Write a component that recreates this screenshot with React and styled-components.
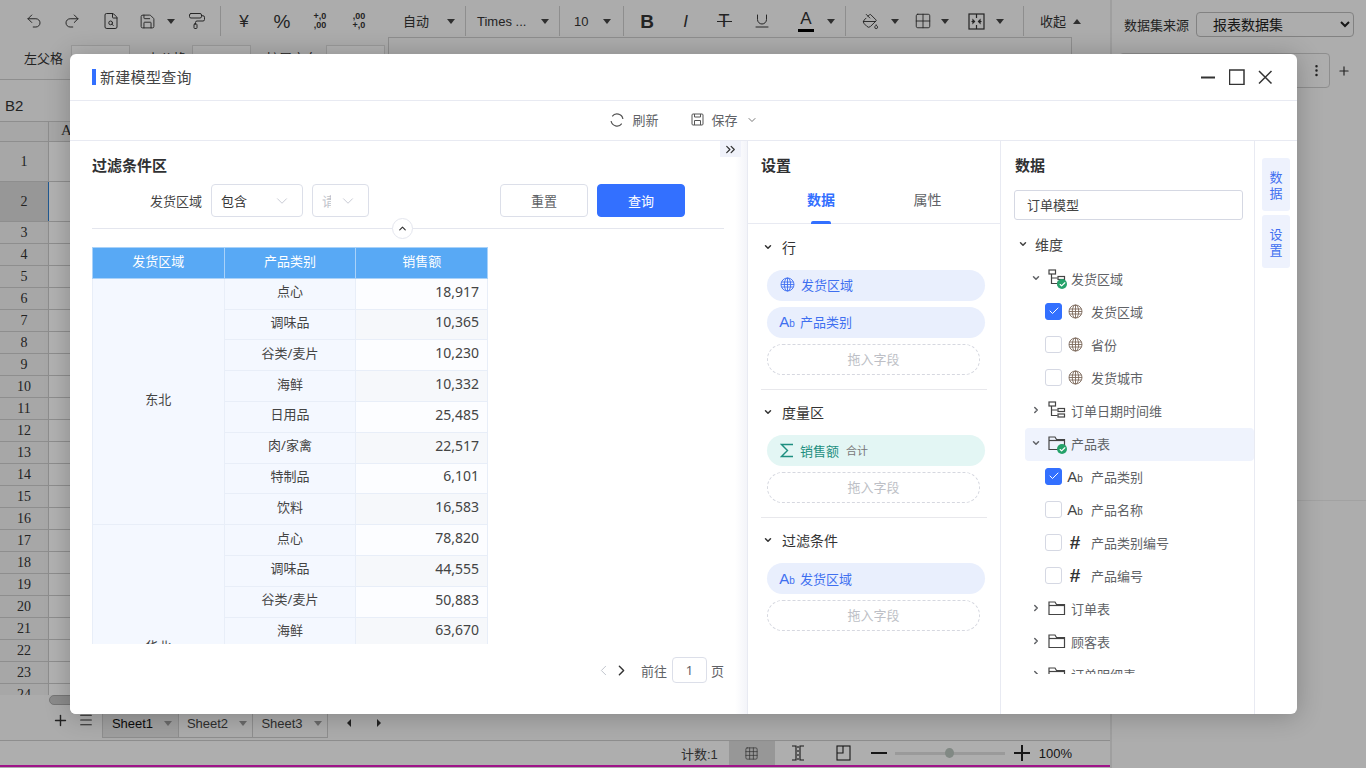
import React from 'react';
import styled, { createGlobalStyle } from 'styled-components';
import {
  Undo2, Redo2, FileSearch, Save, PaintRoller, Underline, PaintBucket, Grid2x2, Grid3x3,
  Plus, ChevronDown, ChevronRight, ChevronLeft, ChevronUp, ChevronsRight,
  EllipsisVertical, Menu, Check
} from 'lucide-react';

const cjk = '"Noto Sans", "Noto Sans CJK SC", sans-serif';
const sheetFont = '"Liberation Sans", "Noto Sans CJK SC", sans-serif';

const Global = createGlobalStyle`
  html, body { margin: 0; padding: 0; height: 100%; overflow: hidden; }
  body { font-family: ${cjk}; font-size: 13px; color: #333; }
  * { box-sizing: border-box; }
`;

const Page = styled.div`
  position: relative;
  width: 1366px;
  height: 768px;
  overflow: hidden;
  display: grid;
  grid-template-columns: 1112px 254px;
  background: #fff;
  font-family: ${sheetFont};
`;

const Backdrop = styled.div`
  position: absolute;
  inset: 0;
  background: rgba(0, 0, 0, 0.3);
`;

/* spreadsheet behind the dialog */
const Sheet = styled.div`
  display: flex;
  flex-direction: column;
  height: 768px;
  border-right: 2px solid #e4e4e4;
  background: #f8f8f8;
`;

const Toolbar = styled.div`
  display: flex;
  align-items: center;
  height: 38px;
  padding: 4px 0 0 15px;
  background: #f6f6f6;
  color: #333;
  font-size: 13px;
  flex: none;
`;

const ToolCell = styled.div`
  width: ${p => p.$w}px;
  height: 30px;
  flex: none;
  display: flex;
  align-items: center;
  justify-content: ${p => p.$pad !== undefined ? 'flex-start' : 'center'};
  padding-left: ${p => p.$pad || 0}px;
  font-size: ${p => p.$size || 13}px;
  font-weight: ${p => p.$bold ? 700 : 400};
  font-style: ${p => p.$italic ? 'italic' : 'normal'};
  line-height: 1;
`;

const ToolSep = styled.div`
  width: 1px;
  height: 30px;
  flex: none;
  margin: 0 ${p => p.$right === undefined ? (p.$gap || 4) : p.$right}px 0 ${p => p.$gap || 4}px;
  background: #ccc;
`;

const Caret = styled.span`
  width: 0;
  height: 0;
  border-left: 4px solid transparent;
  border-right: 4px solid transparent;
  border-top: 5px solid #444;
`;

const UpCaret = styled(Caret)`
  border-top: 0;
  border-bottom: 5px solid #444;
  margin-left: 7px;
`;

const FontA = styled.span`
  display: flex;
  flex-direction: column;
  align-items: center;
  font-size: 17px;
  line-height: 17px;
  &::after { content: ''; width: 16px; height: 3px; background: #000; margin-top: 2px; }
`;

const StruckT = styled.span`
  position: relative;
  font-size: 18px;
  line-height: 1;
  &::after { content: ''; position: absolute; left: -2px; right: -2px; top: 9px; height: 1px; background: #333; }
`;

const Decimals = styled.span`
  font-size: 9px;
  font-weight: 700;
  line-height: 9px;
  text-align: right;
  white-space: pre;
`;

const PropsRow = styled.div`
  display: flex;
  align-items: flex-start;
  height: 42px;
  padding-left: 24px;
  background: #f6f6f6;
  border-bottom: 1px solid #ccc;
  font-size: 13px;
  flex: none;
`;

const PropLabel = styled.span`
  width: ${p => p.$w}px;
  padding-top: 10px;
  flex: none;
`;

const PropInput = styled.div`
  width: 59px;
  height: 26px;
  margin: 7px ${p => p.$after}px 0 0;
  border: 1px solid #ddd;
  background: #fff;
  flex: none;
`;

const PropBox = styled.div`
  width: 684px;
  height: 38px;
  margin: -1px 0 0 3px;
  border: 1px solid #ccc;
  flex: none;
`;

const FormulaBar = styled.div`
  height: 42px;
  padding: 9px 5px 0;
  background: #f6f6f6;
  border-bottom: 1px solid #ccc;
  font-size: 15px;
  display: flex;
  align-items: center;
  flex: none;
`;

const Grid = styled.div`
  height: 573px;
  overflow: hidden;
  background: #fff;
  font-family: "Liberation Serif", serif;
  flex: none;
`;

const ColHeadRow = styled.div`
  display: flex;
  height: 20px;
  background: #f0f0f0;
  border-bottom: 1px solid #ccc;
`;

const Corner = styled.div`
  width: 49px;
  border-right: 1px solid #ccc;
`;

const ColHead = styled.div`
  width: 70px;
  padding-left: 12px;
  font-size: 15px;
`;

const GridRow = styled.div`
  display: flex;
  height: ${p => p.$h}px;
  border-bottom: 1px solid #ccc;
`;

const RowHead = styled.div`
  width: 49px;
  flex: none;
  display: flex;
  align-items: center;
  justify-content: center;
  font-size: 14px;
  background: ${p => p.$active ? '#d8d8d8' : '#f0f0f0'};
  border-right: 1px solid ${p => p.$active ? '#2f7fd0' : '#ccc'};
`;

const ScrollTrack = styled.div`
  height: 12px;
  padding-left: 49px;
  background: #f6f6f6;
  flex: none;
`;

const ScrollThumb = styled.div`
  width: 120px;
  height: 10px;
  background: #c8c8c8;
  border: 1px solid #aaa;
  border-radius: 5px;
`;

const TabBar = styled.div`
  height: 34px;
  display: flex;
  align-items: flex-start;
  padding-left: 51px;
  background: #f6f6f6;
  border-bottom: 1px solid #ccc;
  flex: none;
`;

const TabAction = styled.div`
  width: ${p => p.$w}px;
  height: 26px;
  display: flex;
  align-items: center;
  justify-content: center;
  flex: none;
`;

const SheetTab = styled.div`
  width: ${p => p.$w}px;
  height: 29px;
  display: flex;
  align-items: center;
  justify-content: center;
  gap: 11px;
  margin-top: 2px;
  padding-left: 3px;
  border: 1px solid #ccc;
  border-left-width: ${p => p.$first ? 1 : 0}px;
  background: ${p => p.$active ? '#e4e4e4' : '#f6f6f6'};
  color: ${p => p.$active ? '#111' : '#444'};
  font-size: 13px;
  flex: none;
`;

const TabCaret = styled(Caret)`
  border-top-color: #999;
`;

const ArrowBtn = styled.span`
  width: 0;
  height: 0;
  margin: 12px 0 0 ${p => p.$left}px;
  border-top: 4px solid transparent;
  border-bottom: 4px solid transparent;
  ${p => p.$dir === 'left' ? 'border-right: 4px solid #333;' : 'border-left: 4px solid #333;'}
`;

const StatusBar = styled.div`
  height: 26px;
  display: flex;
  align-items: center;
  justify-content: flex-end;
  padding-right: 38px;
  background: #fafafa;
  border-bottom: 2px solid #e41cc4;
  font-size: 13px;
  color: #444;
  flex: none;
`;

const StatusCount = styled.span`
  margin-right: 11px;
`;

const StatusTile = styled.div`
  width: ${p => p.$w}px;
  height: 24px;
  display: flex;
  align-items: center;
  justify-content: center;
  background: ${p => p.$active ? '#d8d8d8' : 'transparent'};
  flex: none;
`;

const ZoomButton = styled.svg`
  width: 18px;
  height: 18px;
  margin-left: ${p => p.$left || 0}px;
  fill: none;
  stroke: #222;
  stroke-width: 2;
  flex: none;
`;

const Slider = styled.div`
  position: relative;
  width: 110px;
  height: 3px;
  margin: 0 8px;
  background: #ddd;
  flex: none;
  &::after {
    content: '';
    position: absolute;
    left: 50px;
    top: -4px;
    width: 9px;
    height: 10px;
    border-radius: 50%;
    background: #b9c4bd;
  }
`;

const Zoom = styled.span`
  color: #222;
  font-size: 13px;
  margin-left: 8px;
`;

const SidePanel = styled.div`
  display: flex;
  flex-direction: column;
  height: 768px;
  background: #f8f8f8;
  font-size: 13px;
`;

const SourceRow = styled.div`
  display: flex;
  align-items: center;
  gap: 7px;
  padding: 12px 12px 0 12px;
  white-space: nowrap;
`;

const SourceSelect = styled.select`
  width: 158px;
  height: 25px;
  padding-left: 12px;
  border: 1px solid #bbb;
  border-radius: 4px;
  background: #f8f8f8;
  font: 14px ${cjk};
  color: #222;
  flex: none;
`;

const DatasetRow = styled.div`
  display: flex;
  align-items: center;
  gap: 7px;
  margin-top: 16px;
  padding-left: 7px;
`;

const DatasetBox = styled.div`
  width: 211px;
  height: 35px;
  display: flex;
  align-items: center;
  justify-content: flex-end;
  padding-right: 5px;
  border: 1px solid #ccc;
  border-radius: 4px;
`;

const SideRule = styled.div`
  margin-top: 412px;
  height: 1px;
  background: #e8e8e8;
`;

/* dialog */
const Modal = styled.div`
  position: absolute;
  left: 70px;
  top: 54px;
  width: 1227px;
  height: 660px;
  display: flex;
  flex-direction: column;
  background: #fff;
  border-radius: 6px;
  overflow: hidden;
  box-shadow: 0 2px 26px rgba(0, 0, 0, 0.24);
  font-family: ${cjk};
`;

const ModalHead = styled.div`
  height: 47px;
  display: flex;
  align-items: center;
  padding: 0 24px 0 22px;
  border-bottom: 1px solid #e8eaf2;
  flex: none;
`;

const ModalTitle = styled.div`
  flex: 1;
  padding-left: 4px;
  border-left: 4px solid #3370ff;
  font-size: 15px;
  line-height: 16px;
  letter-spacing: 0.3px;
  color: #444;
`;

const WinButtons = styled.div`
  display: flex;
  align-items: center;
  gap: 12px;
  color: #333;
`;

const ActionBar = styled.div`
  height: 40px;
  display: flex;
  align-items: center;
  justify-content: center;
  gap: 32px;
  padding: 0 0 2px 1px;
  border-bottom: 1px solid #e8eaf2;
  color: #606266;
  font-size: 13px;
  flex: none;
`;

const Action = styled.div`
  display: flex;
  align-items: center;
  gap: 8px;
`;

const Body = styled.div`
  flex: 1;
  min-height: 0;
  display: flex;
`;

const ReportPane = styled.div`
  position: relative;
  width: 677px;
  padding: 13px 23px 0 22px;
  background: linear-gradient(to right, #fff 665px, #f3f4f9 677px);
  flex: none;
`;

const CollapseTab = styled.div`
  position: absolute;
  top: 0;
  right: 6px;
  width: 21px;
  height: 16px;
  display: flex;
  align-items: center;
  justify-content: center;
  background: #f0f2fa;
  color: #333;
`;

const PaneTitle = styled.div`
  font-size: 15px;
  line-height: 22px;
  font-weight: 600;
  color: #303133;
`;

const FilterRow = styled.div`
  display: flex;
  align-items: center;
  height: 33px;
  margin-top: 8px;
  padding-left: 58px;
  font-size: 13px;
  color: #444;
`;

const FilterLabel = styled.span`
  margin-right: 9px;
`;

const SelectBox = styled.div`
  width: ${p => p.$w}px;
  height: 33px;
  margin-right: 9px;
  display: flex;
  align-items: center;
  justify-content: space-between;
  padding: 0 11px 0 9px;
  border: 1px solid #dcdfe9;
  border-radius: 4px;
  color: #333;
  flex: none;
`;

const ClippedValue = styled.span`
  width: 9px;
  overflow: hidden;
  white-space: nowrap;
  color: #c0c4cc;
`;

const FormButton = styled.button`
  width: 88px;
  height: 33px;
  margin-left: ${p => p.$left}px;
  padding: 0;
  border: 1px solid ${p => p.$primary ? '#3370ff' : '#dcdfe9'};
  border-radius: 4px;
  background: ${p => p.$primary ? '#3370ff' : '#fff'};
  color: ${p => p.$primary ? '#fff' : '#606266'};
  font: 13px ${cjk};
  flex: none;
`;

const Divider = styled.div`
  position: relative;
  height: 1px;
  margin: 11px 0 18px;
  background: #e4e6ee;
`;

const RoundToggle = styled.div`
  position: absolute;
  left: 300px;
  top: -10px;
  width: 21px;
  height: 21px;
  display: flex;
  align-items: center;
  justify-content: center;
  border: 1px solid #e4e6ee;
  border-radius: 50%;
  background: #fff;
  color: #333;
`;

const TableClip = styled.div`
  height: 397px;
  overflow: hidden;
`;

const DataTable = styled.table`
  width: 396px;
  table-layout: fixed;
  border-collapse: collapse;
  font-size: 13px;
  line-height: 1;
  color: #444;
`;

const Th = styled.th`
  height: 30.8px;
  padding: 0 0 3px;
  background: #58a9f5;
  border: 1px solid #a9d2f9;
  color: #fff;
  font-weight: 400;
`;

const GroupCell = styled.td`
  padding: 0 0 3px;
  background: #f4f8ff;
  border: 1px solid #e8eef8;
  text-align: center;
`;

const CategoryCell = styled.td`
  height: 30.8px;
  padding: 0 0 4px;
  background: #f4f8ff;
  border: 1px solid #e8eef8;
  text-align: center;
`;

const ValueCell = styled.td`
  height: 30.8px;
  padding: 0 8px 4px 0;
  background: ${p => p.$odd ? '#f6f8fb' : '#fcfdff'};
  border: 1px solid #e8eef8;
  text-align: right;
  font-size: 14px;
`;

const Pager = styled.div`
  display: flex;
  align-items: center;
  justify-content: flex-end;
  height: 26px;
  margin-top: 13px;
  font-size: 13px;
  color: #606266;
`;

const NextPage = styled.span`
  display: flex;
  margin: 0 11px 0 1px;
  color: #333;
`;

const PageInput = styled.div`
  width: 35px;
  height: 26px;
  margin: 0 4px 0 5px;
  display: flex;
  align-items: center;
  justify-content: center;
  border: 1px solid #dcdfe9;
  border-radius: 4px;
`;

const SettingsPane = styled.div`
  width: 253px;
  border-left: 1px solid #e8eaf2;
  padding-top: 13px;
  flex: none;
`;

const PaneHeading = styled(PaneTitle)`
  padding-left: ${p => p.$left}px;
`;

const Tabs = styled.div`
  display: flex;
  height: 36px;
  margin-top: 12px;
  border-bottom: 1px solid #e8eaf2;
`;

const TabItem = styled.div`
  position: relative;
  width: ${p => p.$w}px;
  padding-top: 2px;
  text-align: center;
  line-height: 20px;
  font-size: 14px;
  font-weight: ${p => p.$active ? 600 : 400};
  color: ${p => p.$active ? '#3370ff' : '#606266'};
  ${p => p.$active && `
    &::after {
      content: '';
      position: absolute;
      left: 50%;
      margin-left: -10px;
      bottom: -1px;
      width: 20px;
      height: 3px;
      background: #3370ff;
      border-radius: 2px 2px 0 0;
    }
  `}
`;

const Section = styled.div`
  margin: 0 13px;
  padding: ${p => p.$top || 13}px 0 14px 6px;
  border-bottom: ${p => p.$last ? 0 : '1px solid #e8e8ec'};
`;

const SectionHead = styled.div`
  display: flex;
  align-items: center;
  gap: 9px;
  height: 20px;
  margin: 0 0 13px -4px;
  font-size: 14px;
  color: #333;
`;

const Pill = styled.div`
  display: flex;
  align-items: center;
  gap: 6px;
  width: 218px;
  height: 31px;
  margin-bottom: 6px;
  padding: 0 0 ${p => p.$lift ? 3 : 1}px 13px;
  border-radius: 16px;
  background: ${p => p.$measure ? '#e3f6f4' : '#e9effd'};
  color: ${p => p.$measure ? '#1e8f80' : '#3f6ff0'};
  font-size: 13px;
`;

const PillNote = styled.span`
  margin-left: 1px;
  font-size: 11px;
  color: #777;
`;

const TypeMark = styled.span`
  width: 14px;
  display: inline-flex;
  align-items: baseline;
  justify-content: center;
  font-family: "Liberation Sans", sans-serif;
  font-size: 15px;
  line-height: 1;
  flex: none;
  & > small { font-size: 10px; }
`;

const DropZone = styled.div`
  width: 213px;
  height: 31px;
  margin-top: ${p => p.$gap || 0}px;
  padding-bottom: 2px;
  display: flex;
  align-items: center;
  justify-content: center;
  border: 1px dashed #d6d8e0;
  border-radius: 16px;
  color: #bdbfc6;
  font-size: 13px;
`;

const DataPane = styled.div`
  width: 254px;
  border-left: 1px solid #e8eaf2;
  padding-top: 13px;
  display: flex;
  flex-direction: column;
  flex: none;
`;

const ModelInput = styled.div`
  width: 229px;
  height: 30px;
  margin: 14px 0 0 13px;
  padding: 0 0 1px 12px;
  display: flex;
  align-items: center;
  border: 1px solid #d5d8e3;
  border-radius: 3px;
  font-size: 13px;
  color: #444;
  flex: none;
`;

const TreeClip = styled.div`
  height: 446px;
  margin: 8px 0 0 16px;
  padding-left: 8px;
  overflow: hidden;
  flex: none;
`;

const TreeRoot = styled.div`
  display: flex;
  align-items: center;
  gap: 7px;
  height: 35px;
  padding-bottom: 3px;
  margin-left: -7px;
  font-size: 14px;
  color: #444;
`;

const TreeRow = styled.div`
  display: flex;
  align-items: center;
  height: 33px;
  padding: 0 0 3px ${p => p.$leaf ? 20 : 6}px;
  border-radius: 4px;
  font-size: 13px;
  color: #606266;
  background: ${p => p.$hot ? '#eff3fd' : 'transparent'};
`;

const TreeIcon = styled.span`
  position: relative;
  width: 18px;
  height: 18px;
  margin: 0 5px 0 7px;
  display: flex;
  color: #444;
  flex: none;
`;

const Done = styled.span`
  position: absolute;
  right: -1px;
  bottom: -2px;
  width: 10px;
  height: 10px;
  display: flex;
  align-items: center;
  justify-content: center;
  border-radius: 50%;
  background: #25a26a;
  color: #fff;
`;

const CheckBox = styled.span`
  width: 17px;
  height: 17px;
  display: flex;
  align-items: center;
  justify-content: center;
  border: 1px solid ${p => p.$on ? '#3370ff' : '#d5d8e3'};
  border-radius: 3px;
  background: ${p => p.$on ? '#3370ff' : '#fff'};
  color: #fff;
  flex: none;
`;

const LeafIcon = styled.span`
  width: 16px;
  margin: 0 8px 0 5px;
  display: flex;
  justify-content: center;
  color: #7d6a5c;
  flex: none;
`;

const TextIcon = styled(LeafIcon)`
  color: #444;
`;

const Hash = styled.span`
  font: 700 19px/1 "Liberation Sans", sans-serif;
  color: #333;
`;

const SideTabs = styled.div`
  flex: 1;
  border-left: 1px solid #e8eaf2;
  padding: 17px 0 0 7px;
  display: flex;
  flex-direction: column;
  gap: 4px;
`;

const SideTab = styled.div`
  width: 28px;
  height: 53px;
  display: flex;
  align-items: center;
  justify-content: center;
  padding: 0 7px;
  border-radius: 3px;
  background: #eef2fd;
  color: #3f6ff0;
  font-size: 13px;
  line-height: 16px;
  text-align: center;
`;

const HierarchyIcon = () => (
  <svg width="18" height="18" viewBox="0 0 18 18" fill="none" stroke="currentColor" strokeWidth="1.2">
    <rect x="1" y="1" width="6.5" height="4" />
    <path d="M3.5 5v9.5h6M3.5 9h6" />
    <rect x="10" y="7.5" width="6.5" height="3" />
    <rect x="10" y="13" width="6.5" height="3" />
  </svg>
);

const FolderIcon = () => (
  <svg width="18" height="18" viewBox="0 0 18 18" fill="none" stroke="currentColor" strokeWidth="1.2">
    <path d="M1 3h6l1.5 2.5H16.5V15.5H1z" />
    <path d="M1 6.5h15.5" />
  </svg>
);

const GlobeIcon = () => (
  <svg width="15" height="15" viewBox="0 0 15 15" fill="none" stroke="currentColor" strokeWidth="0.9">
    <circle cx="7.5" cy="7.5" r="6.5" />
    <ellipse cx="7.5" cy="7.5" rx="3.2" ry="6.5" />
    <path d="M7.5 1v13M1.6 5h11.8M1 7.5h13M1.6 10h11.8" />
  </svg>
);

const SigmaIcon = () => (
  <svg width="14" height="15" viewBox="0 0 14 15" fill="none" stroke="currentColor" strokeWidth="1.4">
    <path d="M13 1.5H1.5L7.5 7.5L1.5 13.5H13" />
  </svg>
);

const WinIcon = ({ children }) => (
  <svg width="16" height="16" viewBox="0 0 16 16" fill="none" stroke="currentColor" strokeWidth="1.5">{children}</svg>
);

const RefreshRing = () => (
  <svg width="14" height="14" viewBox="0 0 14 14" fill="none" stroke="#555" strokeWidth="1.2">
    <path d="M2.2 3.4A6 6 0 0 1 12.9 6M11.8 10.6A6 6 0 0 1 1.1 8" />
  </svg>
);

const FloppyIcon = () => (
  <svg width="13" height="13" viewBox="0 0 13 13" fill="none" stroke="#555" strokeWidth="1">
    <rect x="1" y="1" width="11" height="11" rx="1" />
    <path d="M3.5 1v3h6V1M3.5 12V7.5h6V12" />
  </svg>
);

const MergeIcon = () => (
  <svg width="17" height="17" viewBox="0 0 17 17" fill="none" stroke="currentColor" strokeWidth="1.2">
    <rect x="1" y="1" width="15" height="15" />
    <path d="M8.5 1v4M8.5 12v4M3.5 8.5h3M10.5 8.5h3" />
    <path d="M6.5 8.5l-1.5-1.5v3zM10.5 8.5l1.5-1.5v3z" fill="currentColor" />
  </svg>
);

const PageBreakIcon = () => (
  <svg width="16" height="16" viewBox="0 0 16 16" fill="none" stroke="#222" strokeWidth="1.1">
    <path d="M2 1h4v14H2M14 1h-4v14h4" />
    <path d="M8 1v14" strokeDasharray="2 2" />
  </svg>
);

const PageViewIcon = () => (
  <svg width="15" height="16" viewBox="0 0 15 16" fill="none" stroke="#222" strokeWidth="1.1">
    <rect x="1" y="1" width="13" height="14" />
    <path d="M7 1v7H1" />
  </svg>
);

const Ab = () => <TypeMark>A<small>b</small></TypeMark>;

const Fold = ({ open }) => open
  ? <ChevronDown size={10} strokeWidth={3.6} />
  : <ChevronRight size={10} strokeWidth={3.6} />;

const rows1 = [
  ['点心', '18,917'], ['调味品', '10,365'], ['谷类/麦片', '10,230'], ['海鲜', '10,332'],
  ['日用品', '25,485'], ['肉/家禽', '22,517'], ['特制品', '6,101'], ['饮料', '16,583']
];
const rows2 = [
  ['点心', '78,820'], ['调味品', '44,555'], ['谷类/麦片', '50,883'], ['海鲜', '63,670'],
  ['日用品', '98,310'], ['肉/家禽', '72,410'], ['特制品', '31,205'], ['饮料', '66,090']
];
const groups = [['东北', rows1], ['华北', rows2]];

const sheetRows = Array.from({ length: 24 }, (v, i) => i + 1);

const Tree = () => (
  <TreeClip>
    <TreeRoot><Fold open />维度</TreeRoot>
    <TreeRow>
      <Fold open />
      <TreeIcon><HierarchyIcon /><Done><Check size={7} strokeWidth={4} /></Done></TreeIcon>发货区域
    </TreeRow>
    {[['发货区域', true], ['省份'], ['发货城市']].map(([name, on]) => (
      <TreeRow $leaf key={name}>
        <CheckBox $on={on}>{on && <Check size={12} strokeWidth={2} />}</CheckBox>
        <LeafIcon><GlobeIcon /></LeafIcon>{name}
      </TreeRow>
    ))}
    <TreeRow>
      <Fold />
      <TreeIcon><HierarchyIcon /></TreeIcon>订单日期时间维
    </TreeRow>
    <TreeRow $hot>
      <Fold open />
      <TreeIcon><FolderIcon /><Done><Check size={7} strokeWidth={4} /></Done></TreeIcon>产品表
    </TreeRow>
    <TreeRow $leaf>
      <CheckBox $on><Check size={12} strokeWidth={2} /></CheckBox>
      <TextIcon><Ab /></TextIcon>产品类别
    </TreeRow>
    <TreeRow $leaf><CheckBox /><TextIcon><Ab /></TextIcon>产品名称</TreeRow>
    <TreeRow $leaf><CheckBox /><TextIcon><Hash>#</Hash></TextIcon>产品类别编号</TreeRow>
    <TreeRow $leaf><CheckBox /><TextIcon><Hash>#</Hash></TextIcon>产品编号</TreeRow>
    {['订单表', '顾客表', '订单明细表'].map(name => (
      <TreeRow key={name}>
        <Fold />
        <TreeIcon><FolderIcon /></TreeIcon>{name}
      </TreeRow>
    ))}
  </TreeClip>
);

const SheetBehind = () => (
  <Sheet>
    <Toolbar>
      <ToolCell $w={38}><Undo2 size={18} strokeWidth={1.3} /></ToolCell>
      <ToolCell $w={38}><Redo2 size={18} strokeWidth={1.3} /></ToolCell>
      <ToolCell $w={39}><FileSearch size={18} strokeWidth={1.3} /></ToolCell>
      <ToolCell $w={34}><Save size={17} strokeWidth={1.3} /></ToolCell>
      <ToolCell $w={14}><Caret /></ToolCell>
      <ToolCell $w={38}><PaintRoller size={18} strokeWidth={1.3} /></ToolCell>
      <ToolSep />
      <ToolCell $w={38} $size={17}>¥</ToolCell>
      <ToolCell $w={38} $size={19}>%</ToolCell>
      <ToolCell $w={38}><Decimals>{'+,0\n,00'}</Decimals></ToolCell>
      <ToolCell $w={40}><Decimals>{',00\n+,0'}</Decimals></ToolCell>
      <ToolCell $w={65} $pad={24}>自动</ToolCell>
      <ToolCell $w={14}><Caret /></ToolCell>
      <ToolSep $gap={7} />
      <ToolCell $w={65} $pad={4}>Times ...</ToolCell>
      <ToolCell $w={14}><Caret /></ToolCell>
      <ToolSep $gap={7} />
      <ToolCell $w={33} $pad={7}>10</ToolCell>
      <ToolCell $w={14}><Caret /></ToolCell>
      <ToolSep $gap={9} $right={4} />
      <ToolCell $w={38} $size={19} $bold>B</ToolCell>
      <ToolCell $w={39} $size={17} $italic>I</ToolCell>
      <ToolCell $w={38}><StruckT>T</StruckT></ToolCell>
      <ToolCell $w={38}><Underline size={18} strokeWidth={1.3} /></ToolCell>
      <ToolCell $w={43} $pad={17}><FontA>A</FontA></ToolCell>
      <ToolCell $w={14}><Caret /></ToolCell>
      <ToolSep $gap={7} />
      <ToolCell $w={35}><PaintBucket size={17} strokeWidth={1.3} /></ToolCell>
      <ToolCell $w={14}><Caret /></ToolCell>
      <ToolCell $w={36} $pad={12}><Grid2x2 size={18} strokeWidth={1.2} /></ToolCell>
      <ToolCell $w={14}><Caret /></ToolCell>
      <ToolCell $w={41} $pad={16}><MergeIcon /></ToolCell>
      <ToolCell $w={14}><Caret /></ToolCell>
      <ToolSep $gap={16} />
      <ToolCell $w={60} $pad={0}>收起<UpCaret /></ToolCell>
    </Toolbar>
    <PropsRow>
      <PropLabel $w={47}>左父格</PropLabel>
      <PropInput $after={17} />
      <PropLabel $w={45}>上父格</PropLabel>
      <PropInput $after={15} />
      <PropLabel $w={60}>扩展方向</PropLabel>
      <PropInput $after={0} />
      <PropBox />
    </PropsRow>
    <FormulaBar>B2</FormulaBar>
    <Grid>
      <ColHeadRow><Corner /><ColHead>A</ColHead></ColHeadRow>
      {sheetRows.map(n => (
        <GridRow key={n} $h={n < 3 ? 40 : 22}>
          <RowHead $active={n === 2}>{n}</RowHead>
        </GridRow>
      ))}
    </Grid>
    <ScrollTrack><ScrollThumb /></ScrollTrack>
    <TabBar>
      <TabAction $w={18}><Plus size={17} strokeWidth={2} /></TabAction>
      <TabAction $w={33}><Menu size={16} strokeWidth={1.6} /></TabAction>
      <SheetTab $w={77} $first $active>Sheet1<TabCaret /></SheetTab>
      <SheetTab $w={74}>Sheet2<TabCaret /></SheetTab>
      <SheetTab $w={75}>Sheet3<TabCaret /></SheetTab>
      <ArrowBtn $dir="left" $left={19} />
      <ArrowBtn $dir="right" $left={26} />
    </TabBar>
    <StatusBar>
      <StatusCount>计数:1</StatusCount>
      <StatusTile $w={46} $active><Grid3x3 size={15} strokeWidth={1.1} /></StatusTile>
      <StatusTile $w={46}><PageBreakIcon /></StatusTile>
      <StatusTile $w={46}><PageViewIcon /></StatusTile>
      <ZoomButton $left={2} viewBox="0 0 18 18"><path d="M2 9h16" /></ZoomButton>
      <Slider />
      <ZoomButton viewBox="0 0 18 18"><path d="M1 9h16M9 1v16" /></ZoomButton>
      <Zoom>100%</Zoom>
    </StatusBar>
  </Sheet>
);

export default function App() {
  return (
    <React.Fragment>
      <Global />
      <Page>
        <SheetBehind />
        <SidePanel>
          <SourceRow>
            数据集来源
            <SourceSelect defaultValue="report"><option value="report">报表数据集</option></SourceSelect>
          </SourceRow>
          <DatasetRow>
            <DatasetBox><EllipsisVertical size={15} /></DatasetBox>
            <Plus size={14} strokeWidth={2} />
          </DatasetRow>
          <SideRule />
        </SidePanel>
        <Backdrop />
        <Modal>
          <ModalHead>
            <ModalTitle>新建模型查询</ModalTitle>
            <WinButtons>
              <WinIcon><path d="M0 8.5h14" strokeWidth="2" /></WinIcon>
              <WinIcon><rect x="0.5" y="1" width="14.5" height="14.5" /></WinIcon>
              <WinIcon><path d="M2 2l12.5 12.5M14.5 2L2 14.5" /></WinIcon>
            </WinButtons>
          </ModalHead>
          <ActionBar>
            <Action><RefreshRing />刷新</Action>
            <Action><FloppyIcon />保存<ChevronDown size={12} strokeWidth={1.6} color="#555" /></Action>
          </ActionBar>
          <Body>
            <ReportPane>
              <CollapseTab><ChevronsRight size={15} strokeWidth={2} /></CollapseTab>
              <PaneTitle>过滤条件区</PaneTitle>
              <FilterRow>
                <FilterLabel>发货区域</FilterLabel>
                <SelectBox $w={92}>包含<ChevronDown size={18} strokeWidth={1} color="#b5b9c6" /></SelectBox>
                <SelectBox $w={57}><ClippedValue>请选择</ClippedValue><ChevronDown size={18} strokeWidth={1} color="#b5b9c6" /></SelectBox>
                <FormButton $left={122}>重置</FormButton>
                <FormButton $left={9} $primary>查询</FormButton>
              </FilterRow>
              <Divider>
                <RoundToggle><ChevronUp size={11} strokeWidth={2.6} /></RoundToggle>
              </Divider>
              <TableClip>
                <DataTable>
                  <thead>
                    <tr><Th>发货区域</Th><Th>产品类别</Th><Th>销售额</Th></tr>
                  </thead>
                  <tbody>
                    {groups.map(([region, rows]) => rows.map(([category, amount], i) => (
                      <tr key={region + category}>
                        {i === 0 && <GroupCell rowSpan={rows.length}>{region}</GroupCell>}
                        <CategoryCell>{category}</CategoryCell>
                        <ValueCell $odd={i % 2 === 1}>{amount}</ValueCell>
                      </tr>
                    )))}
                  </tbody>
                </DataTable>
              </TableClip>
              <Pager>
                <ChevronLeft size={17} strokeWidth={1.4} color="#c0c4cc" />
                <NextPage><ChevronRight size={17} strokeWidth={2} /></NextPage>
                前往<PageInput>1</PageInput>页
              </Pager>
            </ReportPane>
            <SettingsPane>
              <PaneHeading $left={13}>设置</PaneHeading>
              <Tabs>
                <TabItem $w={146} $active>数据</TabItem>
                <TabItem $w={67}>属性</TabItem>
              </Tabs>
              <Section>
                <SectionHead><Fold open />行</SectionHead>
                <Pill $lift><GlobeIcon /><span>发货区域</span></Pill>
                <Pill $lift><Ab /><span>产品类别</span></Pill>
                <DropZone $gap={1}>拖入字段</DropZone>
              </Section>
              <Section $top={12}>
                <SectionHead><Fold open />度量区</SectionHead>
                <Pill $measure><SigmaIcon /><span>销售额</span><PillNote>合计</PillNote></Pill>
                <DropZone>拖入字段</DropZone>
              </Section>
              <Section $top={12} $last>
                <SectionHead><Fold open />过滤条件</SectionHead>
                <Pill><Ab /><span>发货区域</span></Pill>
                <DropZone $gap={1}>拖入字段</DropZone>
              </Section>
            </SettingsPane>
            <DataPane>
              <PaneHeading $left={14}>数据</PaneHeading>
              <ModelInput>订单模型</ModelInput>
              <Tree />
            </DataPane>
            <SideTabs>
              <SideTab>数据</SideTab>
              <SideTab>设置</SideTab>
            </SideTabs>
          </Body>
        </Modal>
      </Page>
    </React.Fragment>
  );
}
